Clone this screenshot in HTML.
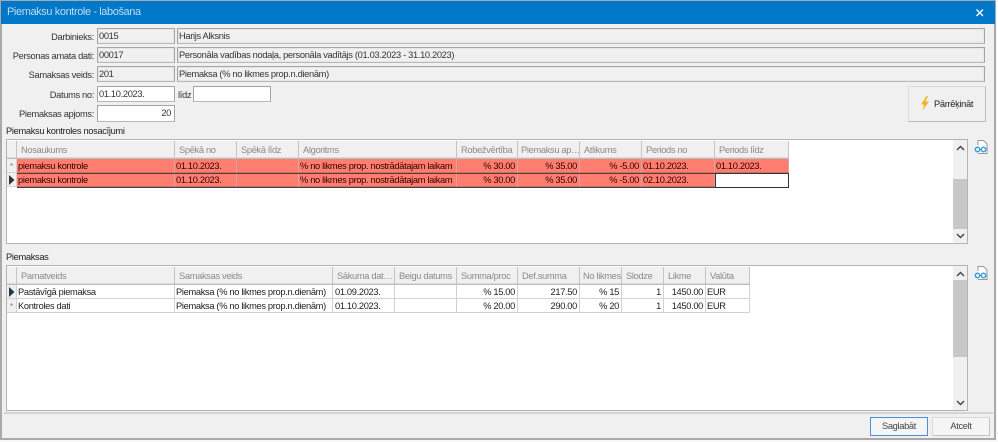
<!DOCTYPE html>
<html><head><meta charset="utf-8">
<style>
html,body{margin:0;padding:0;background:#f3f3f3}
#w{position:relative;width:998px;height:442px;overflow:hidden;background:#f0f0f0;font:9.3px/14px "Liberation Sans",sans-serif;letter-spacing:-.33px;color:#222;filter:blur(.3px)}
#w div{position:absolute;box-sizing:border-box;white-space:nowrap}
.l{text-align:right;left:0;width:94px;color:#333}
.f{border:1px solid #a4a4a4;border-bottom-color:#b8b8b8;height:16px;padding:0 1px;line-height:14px;background:#f0f0f0;box-shadow:inset 0 0 0 1px #e6e6e6;color:#333}
.f.wh{background:#fff;box-shadow:none}
.g{left:6px;width:962px;background:#fff;border:1px solid #b4b4b4}
.h{background:#f0f0f0;border-right:1px solid #c4c4c4;border-bottom:1px solid #bcbcbc;color:#8a8a8a;padding-left:4px;line-height:19px;height:18px;box-shadow:inset 0 -1px 0 #ddd;overflow:hidden}
.c{height:14px;line-height:15px;padding:0 1px;border-right:1px solid #d2d2d2;border-bottom:1px solid #d2d2d2;color:#222;overflow:hidden}
.r{text-align:right;padding-right:2px}
.p{background:#ff7e70;border-right-color:#d9a49e;border-bottom-color:#c77068;color:#300}
.s{left:953px;width:14px;background:#f0f0f0}
.t{left:953px;width:14px;background:#c8c8c8}
.b{background:#f5f5f5;border:1px solid #d4d4d4;text-align:center;color:#444;line-height:16px;height:19px}
svg{position:absolute}
</style></head><body>
<div id="w">
<div style="left:0;top:0;width:996px;height:440px;border:1px solid #a9a9a9;border-width:1px 2px 2px 2px;background:#f0f0f0"></div>
<div style="left:996px;top:0;width:2px;height:442px;background:#fafafa"></div>
<div style="left:0;top:440px;width:998px;height:2px;background:#f8f8f8"></div>
<div style="left:1px;top:1px;width:994px;height:23px;background:#0078ca;color:#bcdcf2;font-size:11px;line-height:23px;padding-left:6px;letter-spacing:-.4px">Piemaksu kontrole - labošana</div>
<svg style="left:975px;top:8px" width="10" height="10"><path d="M1.5 1.5L8 8M8 1.5L1.5 8" stroke="#fff" stroke-width="1.3"/></svg>

<div class="l" style="top:30px">Darbinieks:</div>
<div class="f" style="left:97px;top:28px;width:78px">0015</div>
<div class="f" style="left:177px;top:28px;width:808px">Harijs Alksnis</div>
<div class="l" style="top:49px">Personas amata dati:</div>
<div class="f" style="left:97px;top:47px;width:78px">00017</div>
<div class="f" style="left:177px;top:47px;width:808px">Personāla vadības nodaļa, personāla vadītājs (01.03.2023 - 31.10.2023)</div>
<div class="l" style="top:68px">Samaksas veids:</div>
<div class="f" style="left:97px;top:66px;width:78px">201</div>
<div class="f" style="left:177px;top:66px;width:808px">Piemaksa (% no likmes prop.n.dienām)</div>
<div class="l" style="top:88px">Datums no:</div>
<div class="f wh" style="left:97px;top:86px;width:78px">01.10.2023.</div>
<div style="left:178px;top:88px;color:#333">līdz</div>
<div class="f wh" style="left:193px;top:86px;width:78px"></div>
<div class="l" style="top:107px">Piemaksas apjoms:</div>
<div class="f wh" style="left:97px;top:105px;width:78px;height:17px;text-align:right;padding-right:3px;line-height:15px">20</div>
<div class="b" style="left:908px;top:86px;width:78px;height:36px;background:#f0f0f0;border-color:#dcdcdc #bdbdbd #bdbdbd #dcdcdc;line-height:34px;padding-left:25px;text-align:left;color:#222">Pārrēķināt</div>
<svg style="left:920px;top:96px" width="10" height="15"><path d="M6.5 0L1 8.5H4L2.5 14.5L9 5.5H5.5L8 0Z" fill="#f5b324"/></svg>

<div style="left:6px;top:124px;color:#222">Piemaksu kontroles nosacījumi</div>
<div class="g" style="top:139px;height:105px"></div>
<div class="h" style="left:7px;top:141px;width:10px;padding:0"></div>
<div class="h" style="left:17px;top:141px;width:158px">Nosaukums</div>
<div class="h" style="left:175px;top:141px;width:62px">Spēkā no</div>
<div class="h" style="left:237px;top:141px;width:62px">Spēkā līdz</div>
<div class="h" style="left:299px;top:141px;width:158px">Algoritms</div>
<div class="h" style="left:457px;top:141px;width:61px">Robežvērtība</div>
<div class="h" style="left:518px;top:141px;width:62px;padding-left:3px">Piemaksu ap…</div>
<div class="h" style="left:580px;top:141px;width:62px">Atlikums</div>
<div class="h" style="left:642px;top:141px;width:73px">Periods no</div>
<div class="h" style="left:715px;top:141px;width:74px">Periods līdz</div>

<div class="c" style="left:7px;top:159px;width:10px;color:#777;background:#f0f0f0;font-size:8px;padding:0 0 0 3px">*</div>
<div class="c p" style="left:17px;top:159px;width:158px">piemaksu kontrole</div>
<div class="c p" style="left:175px;top:159px;width:62px">01.10.2023.</div>
<div class="c p" style="left:237px;top:159px;width:62px"></div>
<div class="c p" style="left:299px;top:159px;width:158px">% no likmes prop. nostrādātajam laikam</div>
<div class="c p r" style="left:457px;top:159px;width:61px">% 30.00</div>
<div class="c p r" style="left:518px;top:159px;width:62px">% 35.00</div>
<div class="c p r" style="left:580px;top:159px;width:62px">% -5.00</div>
<div class="c p" style="left:642px;top:159px;width:73px">01.10.2023.</div>
<div class="c p" style="left:715px;top:159px;width:74px">01.10.2023.</div>

<div class="c" style="left:7px;top:173px;width:10px;background:#f0f0f0"></div>
<svg style="left:9px;top:175px" width="6" height="10"><path d="M0 0L5.5 5L0 10Z" fill="#333"/></svg>
<div class="c p" style="left:17px;top:173px;width:158px">piemaksu kontrole</div>
<div class="c p" style="left:175px;top:173px;width:62px">01.10.2023.</div>
<div class="c p" style="left:237px;top:173px;width:62px"></div>
<div class="c p" style="left:299px;top:173px;width:158px">% no likmes prop. nostrādātajam laikam</div>
<div class="c p r" style="left:457px;top:173px;width:61px">% 30.00</div>
<div class="c p r" style="left:518px;top:173px;width:62px">% 35.00</div>
<div class="c p r" style="left:580px;top:173px;width:62px">% -5.00</div>
<div class="c p" style="left:642px;top:173px;width:73px">02.10.2023.</div>
<div style="left:715px;top:173px;width:74px;height:15px;background:#fff;border:1px solid #333"></div>
<div style="left:17px;top:173px;width:698px;height:1px;background:#5a3a38"></div>
<div style="left:17px;top:187px;width:698px;height:1px;background:#4a4040"></div>

<div class="s" style="top:140px;height:103px"></div>
<div class="t" style="top:179px;height:50px"></div>
<svg style="left:956px;top:145px" width="9" height="6"><path d="M1 5L4.5 1.5L8 5" fill="none" stroke="#444" stroke-width="1.4"/></svg>
<svg style="left:956px;top:233px" width="9" height="6"><path d="M1 1L4.5 4.5L8 1" fill="none" stroke="#444" stroke-width="1.4"/></svg>
<svg style="left:974px;top:139px" width="14" height="16"><path d="M4 6V1.5H9.5L13 5V14.5H4" fill="#fff" stroke="#999"/><circle cx="3.5" cy="10.5" r="2.2" fill="none" stroke="#3d9be0" stroke-width="1.5"/><circle cx="9.5" cy="10.5" r="2.2" fill="none" stroke="#3d9be0" stroke-width="1.5"/><path d="M5.5 10.5H7.5" stroke="#3d9be0" stroke-width="1.2"/></svg>

<div style="left:6px;top:250px;color:#222">Piemaksas</div>
<div class="g" style="top:265px;height:146px"></div>
<div class="h" style="left:7px;top:267px;width:10px;padding:0"></div>
<div class="h" style="left:17px;top:267px;width:158px">Pamatveids</div>
<div class="h" style="left:175px;top:267px;width:158px">Samaksas veids</div>
<div class="h" style="left:333px;top:267px;width:62px">Sākuma dat…</div>
<div class="h" style="left:395px;top:267px;width:62px">Beigu datums</div>
<div class="h" style="left:457px;top:267px;width:61px">Summa/proc</div>
<div class="h" style="left:518px;top:267px;width:62px">Def.summa</div>
<div class="h" style="left:580px;top:267px;width:42px;padding-left:3px">No likmes</div>
<div class="h" style="left:622px;top:267px;width:42px">Slodze</div>
<div class="h" style="left:664px;top:267px;width:42px">Likme</div>
<div class="h" style="left:706px;top:267px;width:44px">Valūta</div>

<div class="c" style="left:7px;top:285px;width:10px;background:#e6f2fb"></div>
<svg style="left:9px;top:287px" width="6" height="10"><path d="M0 0L5.5 5L0 10Z" fill="#333"/></svg>
<div class="c" style="left:17px;top:285px;width:158px">Pastāvīgā piemaksa</div>
<div class="c" style="left:175px;top:285px;width:158px">Piemaksa (% no likmes prop.n.dienām)</div>
<div class="c" style="left:333px;top:285px;width:62px;padding-left:2px">01.09.2023.</div>
<div class="c" style="left:395px;top:285px;width:62px"></div>
<div class="c r" style="left:457px;top:285px;width:61px">% 15.00</div>
<div class="c r" style="left:518px;top:285px;width:62px">217.50</div>
<div class="c r" style="left:580px;top:285px;width:42px">% 15</div>
<div class="c r" style="left:622px;top:285px;width:42px">1</div>
<div class="c r" style="left:664px;top:285px;width:42px">1450.00</div>
<div class="c" style="left:706px;top:285px;width:44px">EUR</div>

<div class="c" style="left:7px;top:299px;width:10px;color:#777;background:#f0f0f0;font-size:8px;padding:0 0 0 3px">*</div>
<div class="c" style="left:17px;top:299px;width:158px">Kontroles dati</div>
<div class="c" style="left:175px;top:299px;width:158px">Piemaksa (% no likmes prop.n.dienām)</div>
<div class="c" style="left:333px;top:299px;width:62px;padding-left:2px">01.10.2023.</div>
<div class="c" style="left:395px;top:299px;width:62px"></div>
<div class="c r" style="left:457px;top:299px;width:61px">% 20.00</div>
<div class="c r" style="left:518px;top:299px;width:62px">290.00</div>
<div class="c r" style="left:580px;top:299px;width:42px">% 20</div>
<div class="c r" style="left:622px;top:299px;width:42px">1</div>
<div class="c r" style="left:664px;top:299px;width:42px">1450.00</div>
<div class="c" style="left:706px;top:299px;width:44px">EUR</div>

<div class="s" style="top:266px;height:144px"></div>
<div class="t" style="top:280px;height:77px"></div>
<svg style="left:956px;top:271px" width="9" height="6"><path d="M1 5L4.5 1.5L8 5" fill="none" stroke="#444" stroke-width="1.4"/></svg>
<svg style="left:956px;top:400px" width="9" height="6"><path d="M1 1L4.5 4.5L8 1" fill="none" stroke="#444" stroke-width="1.4"/></svg>
<svg style="left:974px;top:265px" width="14" height="16"><path d="M4 6V1.5H9.5L13 5V14.5H4" fill="#fff" stroke="#999"/><circle cx="3.5" cy="10.5" r="2.2" fill="none" stroke="#3d9be0" stroke-width="1.5"/><circle cx="9.5" cy="10.5" r="2.2" fill="none" stroke="#3d9be0" stroke-width="1.5"/><path d="M5.5 10.5H7.5" stroke="#3d9be0" stroke-width="1.2"/></svg>

<div style="left:4px;top:412px;width:989px;height:2px;background:#d4d4d4"></div>
<div class="b" style="left:870px;top:417px;width:58px;border:1px solid #4a90d9">Saglabāt</div>
<div class="b" style="left:932px;top:417px;width:58px;border-color:#dadada #c4c4c4 #c4c4c4 #dadada">Atcelt</div>
</div>
</body></html>
